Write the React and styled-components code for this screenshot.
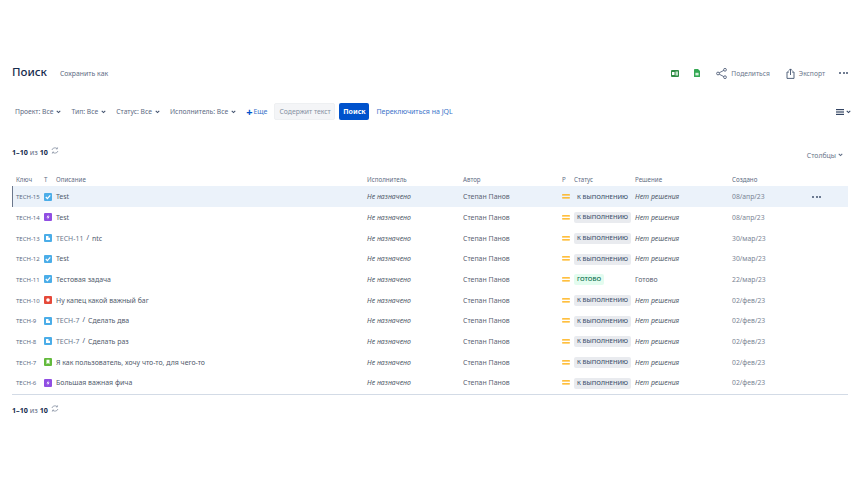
import React from "react";
import styled, { createGlobalStyle } from "styled-components";

const Global = createGlobalStyle`
  html, body { margin: 0; padding: 0; background: #fff; }
  body { font-family: "Noto Sans", "Open Sans", sans-serif; color: #172b4d; }
`;

const Page = styled.div`
  width: 853px; height: 480px; box-sizing: border-box; overflow: hidden;
  padding: 63px 5px 0 12px;
`;
const Header = styled.div`
  display: flex; align-items: center; height: 18px;
`;
const Title = styled.h1`
  margin: 0; font-size: 11.5px; line-height: 18px; font-weight: 500; color: #172b4d;
`;
const SaveAs = styled.span`
  margin-left: 13px; margin-top: 3px; font-size: 6.9px; color: #5e6c84;
`;
const Tools = styled.div`
  margin-left: auto; margin-top: 2px; display: flex; align-items: center;
`;
const ToolIcon = styled.span`
  display: inline-flex; margin-left: ${p => p.$gap || 0}px;
`;
const ToolLabel = styled.span`
  margin-left: 4px; font-size: 6.7px; color: #6b778c;
`;
const Dots = styled.span`
  display: inline-flex; gap: 1.5px; margin-left: ${p => p.$gap || 0}px;
  i { width: 2px; height: 2px; border-radius: 50%; background: ${p => p.$color || "#42526e"}; display: block; }
`;
const FilterBar = styled.div`
  display: flex; align-items: center; height: 17px; margin-top: 22px; padding-left: 3px;
`;
const Filter = styled.span`
  display: inline-flex; align-items: center; gap: 3px; margin-right: 10px;
  font-size: 6.75px; color: #5e6c84; white-space: nowrap;
`;
const More = styled.span`
  display: inline-flex; align-items: center; gap: 1px; font-size: 7px; color: #3b73c9;
  b { font-size: 11px; line-height: 8px; font-weight: 700; color: #0052cc; }
`;
const SearchInput = styled.span`
  margin-left: 7px; width: 61px; height: 17px; box-sizing: border-box; padding-left: 4px;
  background: #f4f5f7; border: 1px solid #eef0f2; border-radius: 2px;
  font-size: 6.8px; line-height: 15px; color: #8590a2; white-space: nowrap;
`;
const SearchButton = styled.span`
  margin-left: 4px; width: 30px; height: 17px; background: #0052cc; border-radius: 2px;
  color: #fff; font-size: 7px; font-weight: 700; line-height: 17px; text-align: center;
`;
const JqlLink = styled.span`
  margin-left: 7px; font-size: 7px; color: #3b73c9;
`;
const ViewToggle = styled.span`
  margin-left: auto; margin-right: -3px; display: inline-flex; align-items: center; gap: 2px;
`;
const CountRow = styled.div`
  display: flex; align-items: center; height: 12px; margin-top: 26px;
`;
const Count = styled.span`
  font-size: 7.2px; color: #5e6c84;
  b { color: #172b4d; font-weight: 700; }
`;
const Refresh = styled.span`
  display: inline-flex; margin-left: 3px; margin-top: -3px;
`;
const ColumnsButton = styled.span`
  margin-left: auto; margin-right: 5px; margin-top: 6px; display: inline-flex; align-items: center; gap: 2px;
  font-size: 6.9px; color: #6b778c;
`;
const Grid = styled.div`
  display: grid; align-items: center; box-sizing: border-box;
  grid-template-columns: 28px 12px 311px 96px 99px 12px 61px 97px 80px 1fr;
  padding-left: ${p => p.$selected ? 3 : 4}px;
`;
const HeadRow = styled(Grid)`
  height: 14px; margin-top: 14px;
  font-size: 6.2px; color: #5e6c84;
`;
const Row = styled(Grid)`
  height: 20.67px; padding-top: 1px; font-size: 6.95px; color: #505f79;
  background: ${p => p.$selected ? "#ebf2fa" : "transparent"};
  border-left: ${p => p.$selected ? "1px solid #6b778c" : "0"};
`;
const Table = styled.div`
  padding-bottom: 1px;
  border-bottom: 1px solid #d3dbe6;
`;
const Key = styled.span`
  font-size: 6px; color: #5e6c84; padding-top: 1px; white-space: nowrap;
`;
const Summary = styled.span`
  white-space: nowrap; color: #505a6b;
`;
const Parent = styled.span`
  color: #6b778c;
`;
const Slash = styled.span`
  margin: 0 3px; position: relative; top: -1px; color: #42526e; font-size: 7px;
`;
const Italic = styled.span`
  font-style: italic; color: #535c6b; white-space: nowrap;
`;
const Plain = styled.span`
  color: #5a6372; white-space: nowrap;
`;
const DateText = styled.span`
  color: #7a8494; white-space: nowrap; font-size: 6.8px;
`;
const Lozenge = styled.span`
  justify-self: start; display: inline-block; padding: 0 3px; height: 11px; line-height: 11px; margin-top: 1px;
  border-radius: 2px; font-size: 6.05px; font-weight: 500; text-transform: uppercase; white-space: nowrap;
  background: ${p => p.$done ? "#e3fcef" : p.$selected ? "transparent" : "#e9ebef"};
  color: ${p => p.$done ? "#006644" : "#42526e"};
`;
const RowDots = styled.span`
  justify-self: start; display: inline-flex; gap: 1.5px;
  i { width: 2px; height: 2px; border-radius: 50%; background: #42526e; display: block; }
`;
const Footer = styled.div`
  display: flex; align-items: center; height: 12px; margin-top: 9px;
`;

const Chevron = ({ color = "#42526e" }) => (
  <svg width="5" height="4" viewBox="0 0 6 5" fill="none">
    <path d="M.8 1 3 3.2 5.2 1" stroke={color} strokeWidth="1.3" />
  </svg>
);

const RefreshIcon = () => (
  <svg width="8" height="7" viewBox="0 0 8 7" fill="none" stroke="#8993a4" strokeWidth=".8">
    <path d="M1 3A3 2.6 0 0 1 6 1.5" />
    <path d="M6.9 4A3 2.6 0 0 1 2 5.5" />
    <path d="M6.6.4 6.3 2 4.9 1.8" />
    <path d="M1.3 6.6 1.7 5 3.1 5.2" />
  </svg>
);

const TypeIcon = ({ type }) => {
  const colors = { task: "#4bade8", feature: "#904ee2", sub: "#4bade8", bug: "#e5493a", story: "#63ba3c" };
  return (
    <svg width="8" height="8" viewBox="0 0 8 8">
      <rect width="8" height="8" rx="1" fill={colors[type]} />
      {type === "task" && <path d="M1.8 4 3.4 5.6 6.2 2.4" fill="none" stroke="#fff" strokeWidth="1.2" />}
      {type === "feature" && <path d="M4.5 1.5 2.5 4.5H4L3.5 6.5 5.6 3.5H4.1Z" fill="#fff" />}
      {type === "sub" && <path d="M2 2h2.5v1.8H6V6H2Z" fill="#fff" />}
      {type === "bug" && <circle cx="4" cy="4" r="1.8" fill="#fff" />}
      {type === "story" && <path d="M2.5 1.8h3v4.4L4 5 2.5 6.2Z" fill="#fff" />}
    </svg>
  );
};

const Priority = () => (
  <svg width="8" height="5" viewBox="0 0 8 5">
    <rect y=".3" width="8" height="1.2" rx=".6" fill="#ffab00" />
    <rect y="3.2" width="8" height="1.2" rx=".6" fill="#ffab00" />
  </svg>
);

const rows = [
  { key: "TECH-15", type: "task", text: "Test", date: "08/апр/23", selected: true },
  { key: "TECH-14", type: "feature", text: "Test", date: "08/апр/23" },
  { key: "TECH-13", type: "sub", parent: "TECH-11", text: "ntc", date: "30/мар/23" },
  { key: "TECH-12", type: "task", text: "Test", date: "30/мар/23" },
  { key: "TECH-11", type: "task", text: "Тестовая задача", date: "22/мар/23", done: true },
  { key: "TECH-10", type: "bug", text: "Ну капец какой важный баг", date: "02/фев/23" },
  { key: "TECH-9", type: "sub", parent: "TECH-7", text: "Сделать два", date: "02/фев/23" },
  { key: "TECH-8", type: "sub", parent: "TECH-7", text: "Сделать раз", date: "02/фев/23" },
  { key: "TECH-7", type: "story", text: "Я как пользователь, хочу что-то, для чего-то", date: "02/фев/23" },
  { key: "TECH-6", type: "feature", text: "Большая важная фича", date: "02/фев/23" },
];

const filters = ["Проект: Все", "Тип: Все", "Статус: Все", "Исполнитель: Все"];

const CountText = () => (
  <Count><b>1–10</b> из <b>10</b></Count>
);

export default function App() {
  return (
    <Page>
      <Global />
      <Header>
        <Title>Поиск</Title>
        <SaveAs>Сохранить как</SaveAs>
        <Tools>
          <ToolIcon>
            <svg width="8" height="7" viewBox="0 0 8 7">
              <rect width="8" height="7" rx="1" fill="#2e8b45" />
              <rect x="4.5" y="1.5" width="2.5" height="4" fill="#bfe3c8" />
              <rect x="1" y="2" width="2.5" height="3" fill="#fff" />
            </svg>
          </ToolIcon>
          <ToolIcon $gap={15}>
            <svg width="6" height="8" viewBox="0 0 6 8">
              <path d="M0 .6C0 .3.3 0 .6 0H4l2 2v5.4c0 .3-.3.6-.6.6H.6C.3 8 0 7.7 0 7.4Z" fill="#34a853" />
              <rect x="1.4" y="3.8" width="3.2" height="2.6" fill="#d5f0dc" />
            </svg>
          </ToolIcon>
          <ToolIcon $gap={16}>
            <svg width="11" height="11" viewBox="0 0 11 11" fill="none" stroke="#42526e" strokeWidth=".8">
              <circle cx="2" cy="5.5" r="1.4" />
              <circle cx="9" cy="1.8" r="1.4" />
              <circle cx="9" cy="9.2" r="1.4" />
              <path d="M3.2 4.8 7.8 2.4M3.2 6.2 7.8 8.6" />
            </svg>
          </ToolIcon>
          <ToolLabel>Поделиться</ToolLabel>
          <ToolIcon $gap={16}>
            <svg width="9" height="11" viewBox="0 0 9 11" fill="none" stroke="#42526e" strokeWidth=".9">
              <path d="M3 4H1v6.4h7V4H6" />
              <path d="M4.5 7V1M2.8 2.6 4.5.9l1.7 1.7" />
            </svg>
          </ToolIcon>
          <ToolLabel>Экспорт</ToolLabel>
          <Dots $gap={14}><i /><i /><i /></Dots>
        </Tools>
      </Header>

      <FilterBar>
        {filters.map(f => (
          <Filter key={f}>{f}<Chevron /></Filter>
        ))}
        <More><b>+</b>Еще</More>
        <SearchInput>Содержит текст</SearchInput>
        <SearchButton>Поиск</SearchButton>
        <JqlLink>Переключиться на JQL</JqlLink>
        <ViewToggle>
          <svg width="8" height="6" viewBox="0 0 8 6" fill="#344563">
            <rect width="8" height="1.2" />
            <rect y="2.4" width="8" height="1.2" />
            <rect y="4.8" width="8" height="1.2" />
          </svg>
          <Chevron color="#344563" />
        </ViewToggle>
      </FilterBar>

      <CountRow>
        <CountText />
        <Refresh><RefreshIcon /></Refresh>
        <ColumnsButton>Столбцы<Chevron color="#5e6c84" /></ColumnsButton>
      </CountRow>

      <Table>
        <HeadRow>
          <span>Ключ</span><span>Т</span><span>Описание</span><span>Исполнитель</span>
          <span>Автор</span><span>Р</span><span>Статус</span><span>Решение</span><span>Создано</span><span />
        </HeadRow>
        {rows.map(r => (
          <Row key={r.key} $selected={r.selected}>
            <Key>{r.key}</Key>
            <TypeIcon type={r.type} />
            <Summary>
              {r.parent && <Parent>{r.parent}</Parent>}
              {r.parent && <Slash>/</Slash>}
              {r.text}
            </Summary>
            <Italic>Не назначено</Italic>
            <Plain>Степан Панов</Plain>
            <Priority />
            <Lozenge $done={r.done} $selected={r.selected}>{r.done ? "Готово" : "К выполнению"}</Lozenge>
            {r.done ? <Plain>Готово</Plain> : <Italic>Нет решения</Italic>}
            <DateText>{r.date}</DateText>
            {r.selected ? <RowDots><i /><i /><i /></RowDots> : <span />}
          </Row>
        ))}
      </Table>

      <Footer>
        <CountText />
        <Refresh><RefreshIcon /></Refresh>
      </Footer>
    </Page>
  );
}
